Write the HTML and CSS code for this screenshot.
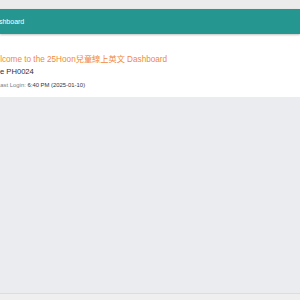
FILE: index.html
```html
<!DOCTYPE html>
<html>
<head>
<meta charset="utf-8">
<link rel="stylesheet" href="styles.css">
</head>
<body>
<div class="app">
  <header class="topbar"><span class="title">Dashboard</span></header>
  <main class="main">
    <section class="card">
      <h1 class="welcome">Welcome to the 25Hoon兒童線上英文 Dashboard</h1>
      <div class="info">
        <p class="name">Name PH0024</p>
        <p class="login"><span class="label">Last Login:</span> <span class="value">6:40 PM (2025-01-10)</span></p>
      </div>
    </section>
  </main>
  <footer class="footer"></footer>
</div>
</body>
</html>
```
FILE: styles.css
```css
html, body {
  margin: 0;
  padding: 0;
  height: 100%;
  background: #ebebeb;
  font-family: "Liberation Sans", Arial, "Noto Sans CJK TC", sans-serif;
  overflow: hidden;
}
.app {
  padding-top: 9px;
  height: 100%;
  box-sizing: border-box;
  display: flex;
  flex-direction: column;
}
.topbar {
  height: 25px;
  background: #259690;
  box-shadow: 0 1px 2px rgba(0,0,0,0.25);
  display: flex;
  align-items: center;
  position: relative;
  z-index: 1;
}
.title {
  color: #fff;
  font-size: 7px;
  margin-left: -10px;
}
.main {
  flex: 1;
  background: #ebecf0;
  border-bottom: 1px solid #dcdde0;
}
.card {
  background: #fff;
  padding: 21px 0 8px 0;
  margin-left: -12px;
}
.welcome {
  margin: 0;
  font-weight: normal;
  font-size: 8.2px;
  color: #f0893d;
  line-height: 10px;
}
.info {
  margin-left: -4px;
}
.name {
  margin: 2px 0 0 0;
  font-size: 7.6px;
  color: #2b2f3a;
  line-height: 10px;
}
.login {
  margin: 4px 0 0 13px;
  font-size: 5.9px;
  line-height: 8px;
}
.label { color: #7a7d85; }
.value { color: #33363e; }
.footer {
  height: 6px;
  background: #efefef;
}
```
